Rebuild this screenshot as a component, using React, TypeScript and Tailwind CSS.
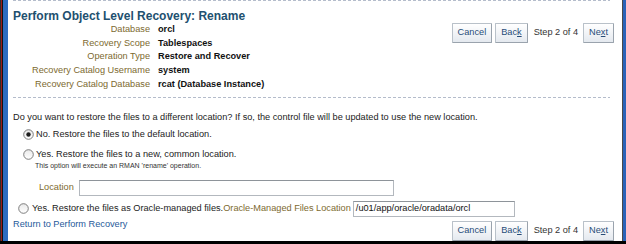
const font = "font-['Liberation_Sans',Arial,Helvetica,sans-serif]";

const details = [
  { label: 'Database', value: 'orcl' },
  { label: 'Recovery Scope', value: 'Tablespaces' },
  { label: 'Operation Type', value: 'Restore and Recover' },
  { label: 'Recovery Catalog Username', value: 'system' },
  { label: 'Recovery Catalog Database', value: 'rcat (Database Instance)' },
];

function Dashed() {
  return (
    <div className="mr-[12px] h-px bg-[linear-gradient(to_right,#b4bccb_3px,transparent_3px)] bg-[length:5px_1px]" />
  );
}

function Btn({ children }: { children: React.ReactNode }) {
  return (
    <button className="flex h-[20px] items-center rounded-[1px] border border-[#b9c1c9] border-b-[#9aa3ad] border-r-[#9aa3ad] bg-[linear-gradient(#ffffff,#e4e9ef)] px-[5px] text-[9.2px] text-[#264c78]">
      {children}
    </button>
  );
}

function Buttons() {
  return (
    <div className="flex items-center">
      <Btn>Cancel</Btn>
      <div className="ml-[3px]">
        <Btn>
          Bac<span className="underline">k</span>
        </Btn>
      </div>
      <span className="ml-[6px] mr-[5px] text-[9.2px] text-[#333]">Step 2 of 4</span>
      <Btn>
        Ne<span className="underline">x</span>t
      </Btn>
    </div>
  );
}

function Radio({ checked }: { checked?: boolean }) {
  return (
    <svg width="11" height="11" viewBox="0 0 11 11" className="shrink-0">
      <defs>
        <linearGradient id="rg" x1="0" y1="0" x2="0" y2="1">
          <stop offset="0" stopColor="#e9e9e9" />
          <stop offset="1" stopColor="#ffffff" />
        </linearGradient>
      </defs>
      <circle cx="5.5" cy="5.5" r="4.8" fill="url(#rg)" stroke="#6f6f6f" strokeWidth="0.9" />
      {checked && <circle cx="5.5" cy="5.5" r="2.2" fill="#1e1e1e" />}
    </svg>
  );
}

export default function App() {
  return (
    <div className={`flex h-[244px] w-[626px] flex-col overflow-hidden bg-white ${font}`}>
      <div className="flex min-h-0 flex-1">
        <div className="w-px bg-[#2b2b2b]" />
        <div className="w-px bg-[#9b1b1b]" />
        <div className="w-px bg-[#111111]" />
        <div className="w-[5px] bg-[#2c6cc0]" />

        <main className="min-w-0 flex-1 overflow-hidden pl-[5px]">
          <Dashed />

          <div className="flex justify-between">
            <div>
              <h1 className="mt-[8px] text-[12px] font-bold leading-[14px] text-[#22506f]">
                Perform Object Level Recovery: Rename
              </h1>
              <dl className="grid grid-cols-[137px_auto] gap-x-[8px] text-[9.2px] leading-[13.7px]">
                {details.map((d) => (
                  <div key={d.label} className="contents">
                    <dt className="text-right text-[#7d6a2f]">{d.label}</dt>
                    <dd className="font-bold text-[#111]">{d.value}</dd>
                  </div>
                ))}
              </dl>
            </div>
            <div className="mr-[8px] mt-[22px]">
              <Buttons />
            </div>
          </div>

          <div className="mt-[5px]">
            <Dashed />
          </div>

          <p className="mt-[12px] h-[14px] text-[9.2px] leading-[14px] text-[#222]">
            Do you want to restore the files to a different location? If so, the control file will be
            updated to use the new location.
          </p>

          <div className="mt-[4px] flex h-[14px] items-center pl-[10px] text-[9.2px] text-[#222]">
            <Radio checked />
            <span className="ml-[2px]">No. Restore the files to the default location.</span>
          </div>

          <div className="mt-[6px] flex h-[14px] items-center pl-[10px] text-[9.2px] text-[#222]">
            <Radio />
            <span className="ml-[2px]">Yes. Restore the files to a new, common location.</span>
          </div>
          <p className="h-[8px] pl-[22px] text-[7px] leading-[8px] text-[#333]">
            This option will execute an RMAN 'rename' operation.
          </p>

          <div className="mt-[10px] flex items-center pl-[26px]">
            <label className="text-[9.2px] text-[#7d6a2f]">Location</label>
            <div className="ml-[5px] h-[16px] w-[315px] border border-[#b3b8be] border-t-[#8e949a] bg-white" />
          </div>

          <div className="mt-[5px] flex items-center pl-[5px] text-[9.2px] text-[#222]">
            <Radio />
            <span className="ml-[3px]">Yes. Restore the files as Oracle-managed files.</span>
            <span className="text-[#7d6a2f]">Oracle-Managed Files Location</span>
            <div className="ml-[2px] flex h-[16px] w-[162px] items-center border border-[#b3b8be] border-t-[#8e949a] bg-white px-[2px] text-[#111]">
              /u01/app/oracle/oradata/orcl
            </div>
          </div>

          <div className="mr-[8px] flex items-start justify-between">
            <a className="mt-[1px] block h-[12px] text-[9.2px] leading-[12px] text-[#275a9a]">
              Return to Perform Recovery
            </a>
            <div className="mt-[4px]">
              <Buttons />
            </div>
          </div>
        </main>

        <div className="w-px bg-[#4a4a4a]" />
        <div className="w-[3px] bg-[#2a62b8]" />
      </div>
      <div className="h-[3px] shrink-0 bg-black" />
    </div>
  );
}
